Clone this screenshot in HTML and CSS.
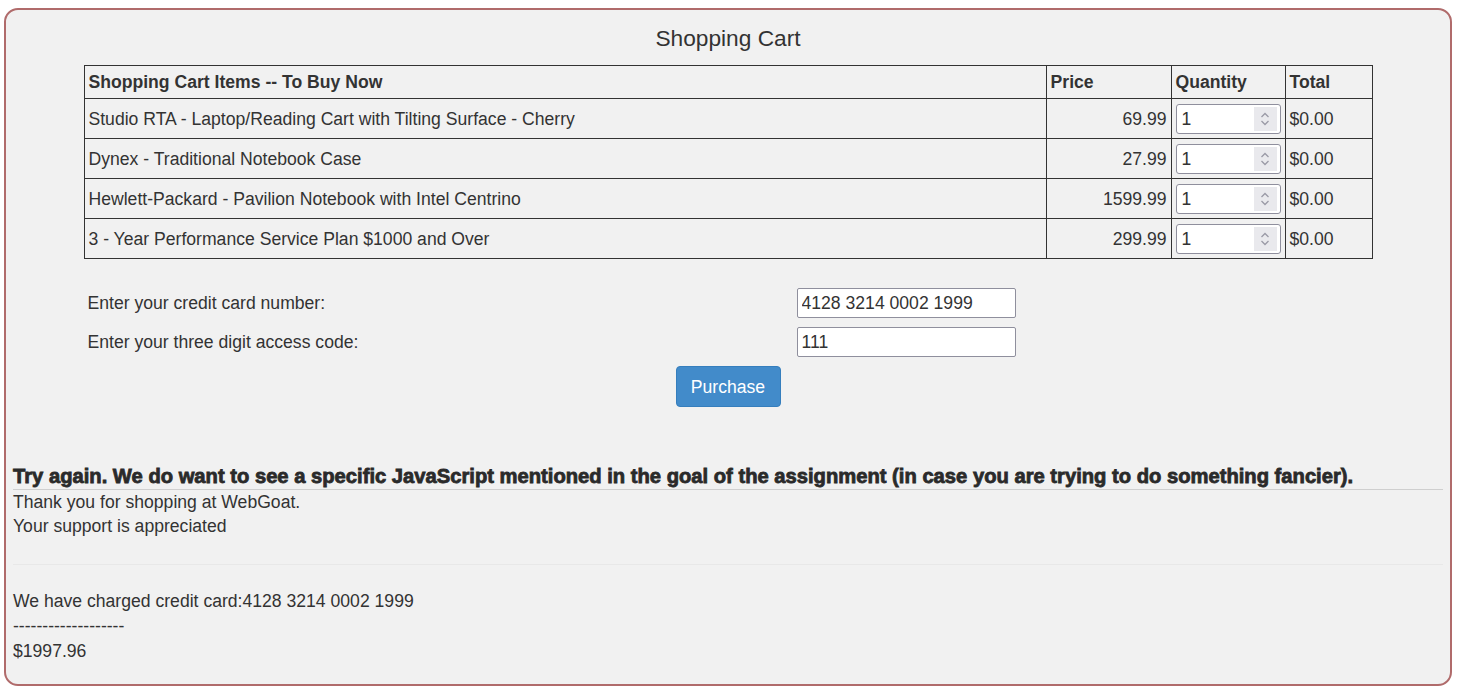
FILE: index.html
```html
<!DOCTYPE html>
<html>
<head>
<meta charset="utf-8">
<link rel="stylesheet" href="styles.css">
</head>
<body>
<div class="panel">
  <h2 class="title">Shopping Cart</h2>
  <table class="cart">
    <thead>
      <tr>
        <th class="c-item">Shopping Cart Items -- To Buy Now</th>
        <th class="c-price">Price</th>
        <th class="c-qty">Quantity</th>
        <th class="c-total">Total</th>
      </tr>
    </thead>
    <tbody>
      <tr>
        <td>Studio RTA - Laptop/Reading Cart with Tilting Surface - Cherry</td>
        <td class="num">69.99</td>
        <td class="qcell"><div class="spin"><span class="val">1</span><span class="arrows"><svg width="10" height="16" viewBox="0 0 10 16"><path d="M1.5 6 L5 2.5 L8.5 6 M1.5 10 L5 13.5 L8.5 10" fill="none" stroke="#9a9aa6" stroke-width="1.3"/></svg></span></div></td>
        <td>$0.00</td>
      </tr>
      <tr>
        <td>Dynex - Traditional Notebook Case</td>
        <td class="num">27.99</td>
        <td class="qcell"><div class="spin"><span class="val">1</span><span class="arrows"><svg width="10" height="16" viewBox="0 0 10 16"><path d="M1.5 6 L5 2.5 L8.5 6 M1.5 10 L5 13.5 L8.5 10" fill="none" stroke="#9a9aa6" stroke-width="1.3"/></svg></span></div></td>
        <td>$0.00</td>
      </tr>
      <tr>
        <td>Hewlett-Packard - Pavilion Notebook with Intel Centrino</td>
        <td class="num">1599.99</td>
        <td class="qcell"><div class="spin"><span class="val">1</span><span class="arrows"><svg width="10" height="16" viewBox="0 0 10 16"><path d="M1.5 6 L5 2.5 L8.5 6 M1.5 10 L5 13.5 L8.5 10" fill="none" stroke="#9a9aa6" stroke-width="1.3"/></svg></span></div></td>
        <td>$0.00</td>
      </tr>
      <tr>
        <td>3 - Year Performance Service Plan $1000 and Over</td>
        <td class="num">299.99</td>
        <td class="qcell"><div class="spin"><span class="val">1</span><span class="arrows"><svg width="10" height="16" viewBox="0 0 10 16"><path d="M1.5 6 L5 2.5 L8.5 6 M1.5 10 L5 13.5 L8.5 10" fill="none" stroke="#9a9aa6" stroke-width="1.3"/></svg></span></div></td>
        <td>$0.00</td>
      </tr>
    </tbody>
  </table>

  <div class="payform">
    <div class="frow">
      <span class="flabel">Enter your credit card number:</span>
      <input class="field" type="text" value="4128 3214 0002 1999">
    </div>
    <div class="frow">
      <span class="flabel">Enter your three digit access code:</span>
      <input class="field" type="text" value="111">
    </div>
    <div class="btnrow">
      <button class="purchase">Purchase</button>
    </div>
  </div>

  <div class="feedback">
    <div class="warn">Try again. We do want to see a specific JavaScript mentioned in the goal of the assignment (in case you are trying to do something fancier).</div>
    <div class="output">
      <div class="line">Thank you for shopping at WebGoat.</div>
      <div class="line">Your support is appreciated</div>
      <div class="faint"></div>
      <div class="line2">We have charged credit card:4128 3214 0002 1999</div>
      <div class="line2">-------------------</div>
      <div class="line2">$1997.96</div>
    </div>
  </div>
</div>
</body>
</html>
```

FILE: styles.css
```css
* { box-sizing: border-box; }
html, body { margin: 0; padding: 0; background: #ffffff; }
body {
  font-family: "Liberation Sans", Arial, sans-serif;
  font-size: 17.6px;
  color: #333333;
  padding: 8px 6px 2px 4px;
}
.panel {
  width: 1448px;
  height: 678px;
  border: 2px solid #b06b6b;
  border-radius: 14px;
  background: #f1f1f1;
  padding: 0 7px;
  overflow: hidden;
}
.title {
  margin: 0;
  padding-top: 15px;
  height: 55px;
  text-align: center;
  font-weight: normal;
  font-size: 22.7px;
  line-height: 26px;
  color: #333;
}
.cart {
  border-collapse: collapse;
  width: 1289px;
  margin: 0 auto;
}
.cart th, .cart td {
  border: 1px solid #333;
  text-align: left;
  padding: 1px 4px 0;
  font-size: 17.6px;
}
.cart th { height: 33px; font-weight: bold; }
.cart td { height: 40px; }
.c-item { width: 963px; }
.c-price { width: 125px; }
.c-qty { width: 114px; }
.c-total { width: 87px; }
.cart td.num { text-align: right; }
.cart td.qcell { padding: 0 4px; }
.spin {
  display: flex;
  align-items: center;
  width: 105px;
  height: 30px;
  background: #fff;
  border: 1px solid #8f8f9d;
  border-radius: 3px;
  padding: 0 3px 0 5px;
}
.spin .val { flex: 1; padding-top: 1px; }
.spin .arrows {
  width: 23px;
  height: 24px;
  background: #e9e9ed;
  display: flex;
  align-items: center;
  justify-content: center;
}
.payform {
  width: 1289px;
  margin: 29px auto 0;
}
.frow {
  display: flex;
  align-items: center;
  height: 30px;
  margin-bottom: 9px;
}
.flabel {
  width: 713px;
  padding-left: 4px;
  padding-top: 1px;
}
.field {
  width: 219px;
  height: 30px;
  border: 1px solid #8f8f9d;
  border-radius: 2px;
  background: #fff;
  font-family: "Liberation Sans", Arial, sans-serif;
  font-size: 17.6px;
  color: #333;
  padding: 1px 4px 0;
  margin: 0;
}
.btnrow {
  display: flex;
  justify-content: center;
}
.purchase {
  width: 105px;
  height: 41px;
  background: #428bca;
  border: 1px solid #357ebd;
  border-radius: 4px;
  color: #fff;
  font-family: "Liberation Sans", Arial, sans-serif;
  font-size: 17.6px;
  padding: 1px 0 0;
  margin: 0;
}
.feedback { margin-top: 57px; }
.warn {
  font-weight: bold;
  font-size: 20.2px;
  line-height: 24px;
  -webkit-text-stroke: 0.8px #2a2a2a;
  color: #2a2a2a;
  padding-bottom: 1px;
  border-bottom: 1px solid #cfcfcf;
}
.output .line { line-height: 24px; }
.faint {
  height: 1px;
  margin: 26px 0 24px;
  background: #e8e8e8;
}
.line2 { line-height: 25px; }
```
